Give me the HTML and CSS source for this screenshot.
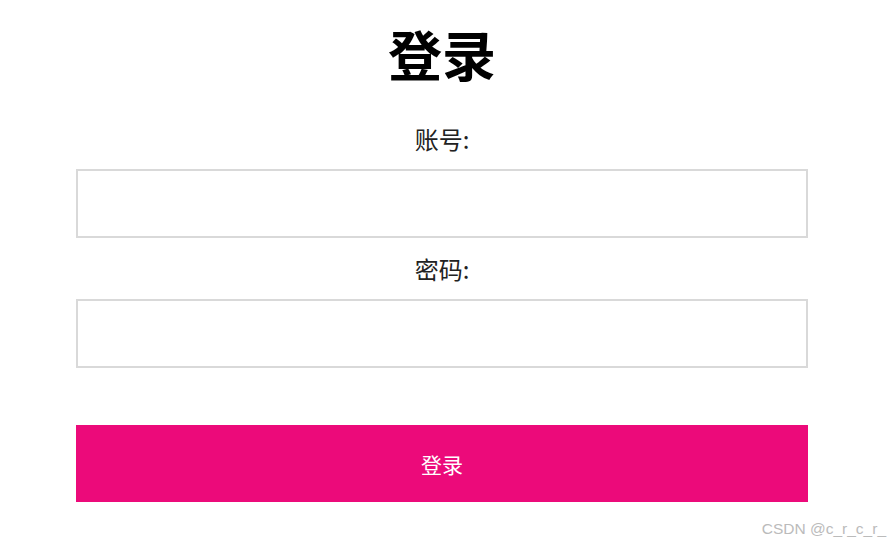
FILE: index.html
```html
<!DOCTYPE html>
<html lang="zh">
<head>
<meta charset="utf-8">
<link rel="stylesheet" href="styles.css">
</head>
<body>
<div class="page">
  <form class="login">
    <h1 class="title">登录</h1>
    <label class="label">账号:</label>
    <input class="field" type="text">
    <label class="label label-2">密码:</label>
    <input class="field" type="password">
    <button class="btn" type="button">登录</button>
  </form>
  <div class="mark">CSDN @c_r_c_r_</div>
</div>
</body>
</html>
```
FILE: styles.css
```css
html, body {
  margin: 0;
  padding: 0;
  background: #fff;
}
body {
  width: 891px;
  height: 547px;
  overflow: hidden;
  font-family: "Noto Sans CJK SC", "Noto Sans", sans-serif;
  color: #222;
}
.page {
  position: relative;
  height: 547px;
}
.login {
  width: 732px;
  margin-left: 76px;
  padding-top: 23px;
  display: flex;
  flex-direction: column;
  align-items: stretch;
}
.title {
  margin: 0;
  text-align: center;
  font-size: 54px;
  line-height: 62px;
  font-weight: 700;
  color: #000;
}
.label {
  margin-top: 39px;
  text-align: center;
  font-size: 24px;
  line-height: 30px;
  color: #222;
}
.label-2 {
  margin-top: 16px;
}
.field {
  margin-top: 15px;
  box-sizing: border-box;
  height: 69px;
  width: 100%;
  border: 2px solid #d9d9d9;
  background: #fff;
  outline: none;
}
.btn {
  margin-top: 57px;
  height: 77px;
  width: 100%;
  border: none;
  background: #ec0a7a;
  color: #fff;
  font-family: "Noto Sans CJK SC", "Noto Sans", sans-serif;
  font-size: 21px;
}
.mark {
  position: absolute;
  right: 5px;
  bottom: 9px;
  font-family: "Liberation Sans", Arial, sans-serif;
  font-size: 15.5px;
  color: #bbbbbb;
}
```
